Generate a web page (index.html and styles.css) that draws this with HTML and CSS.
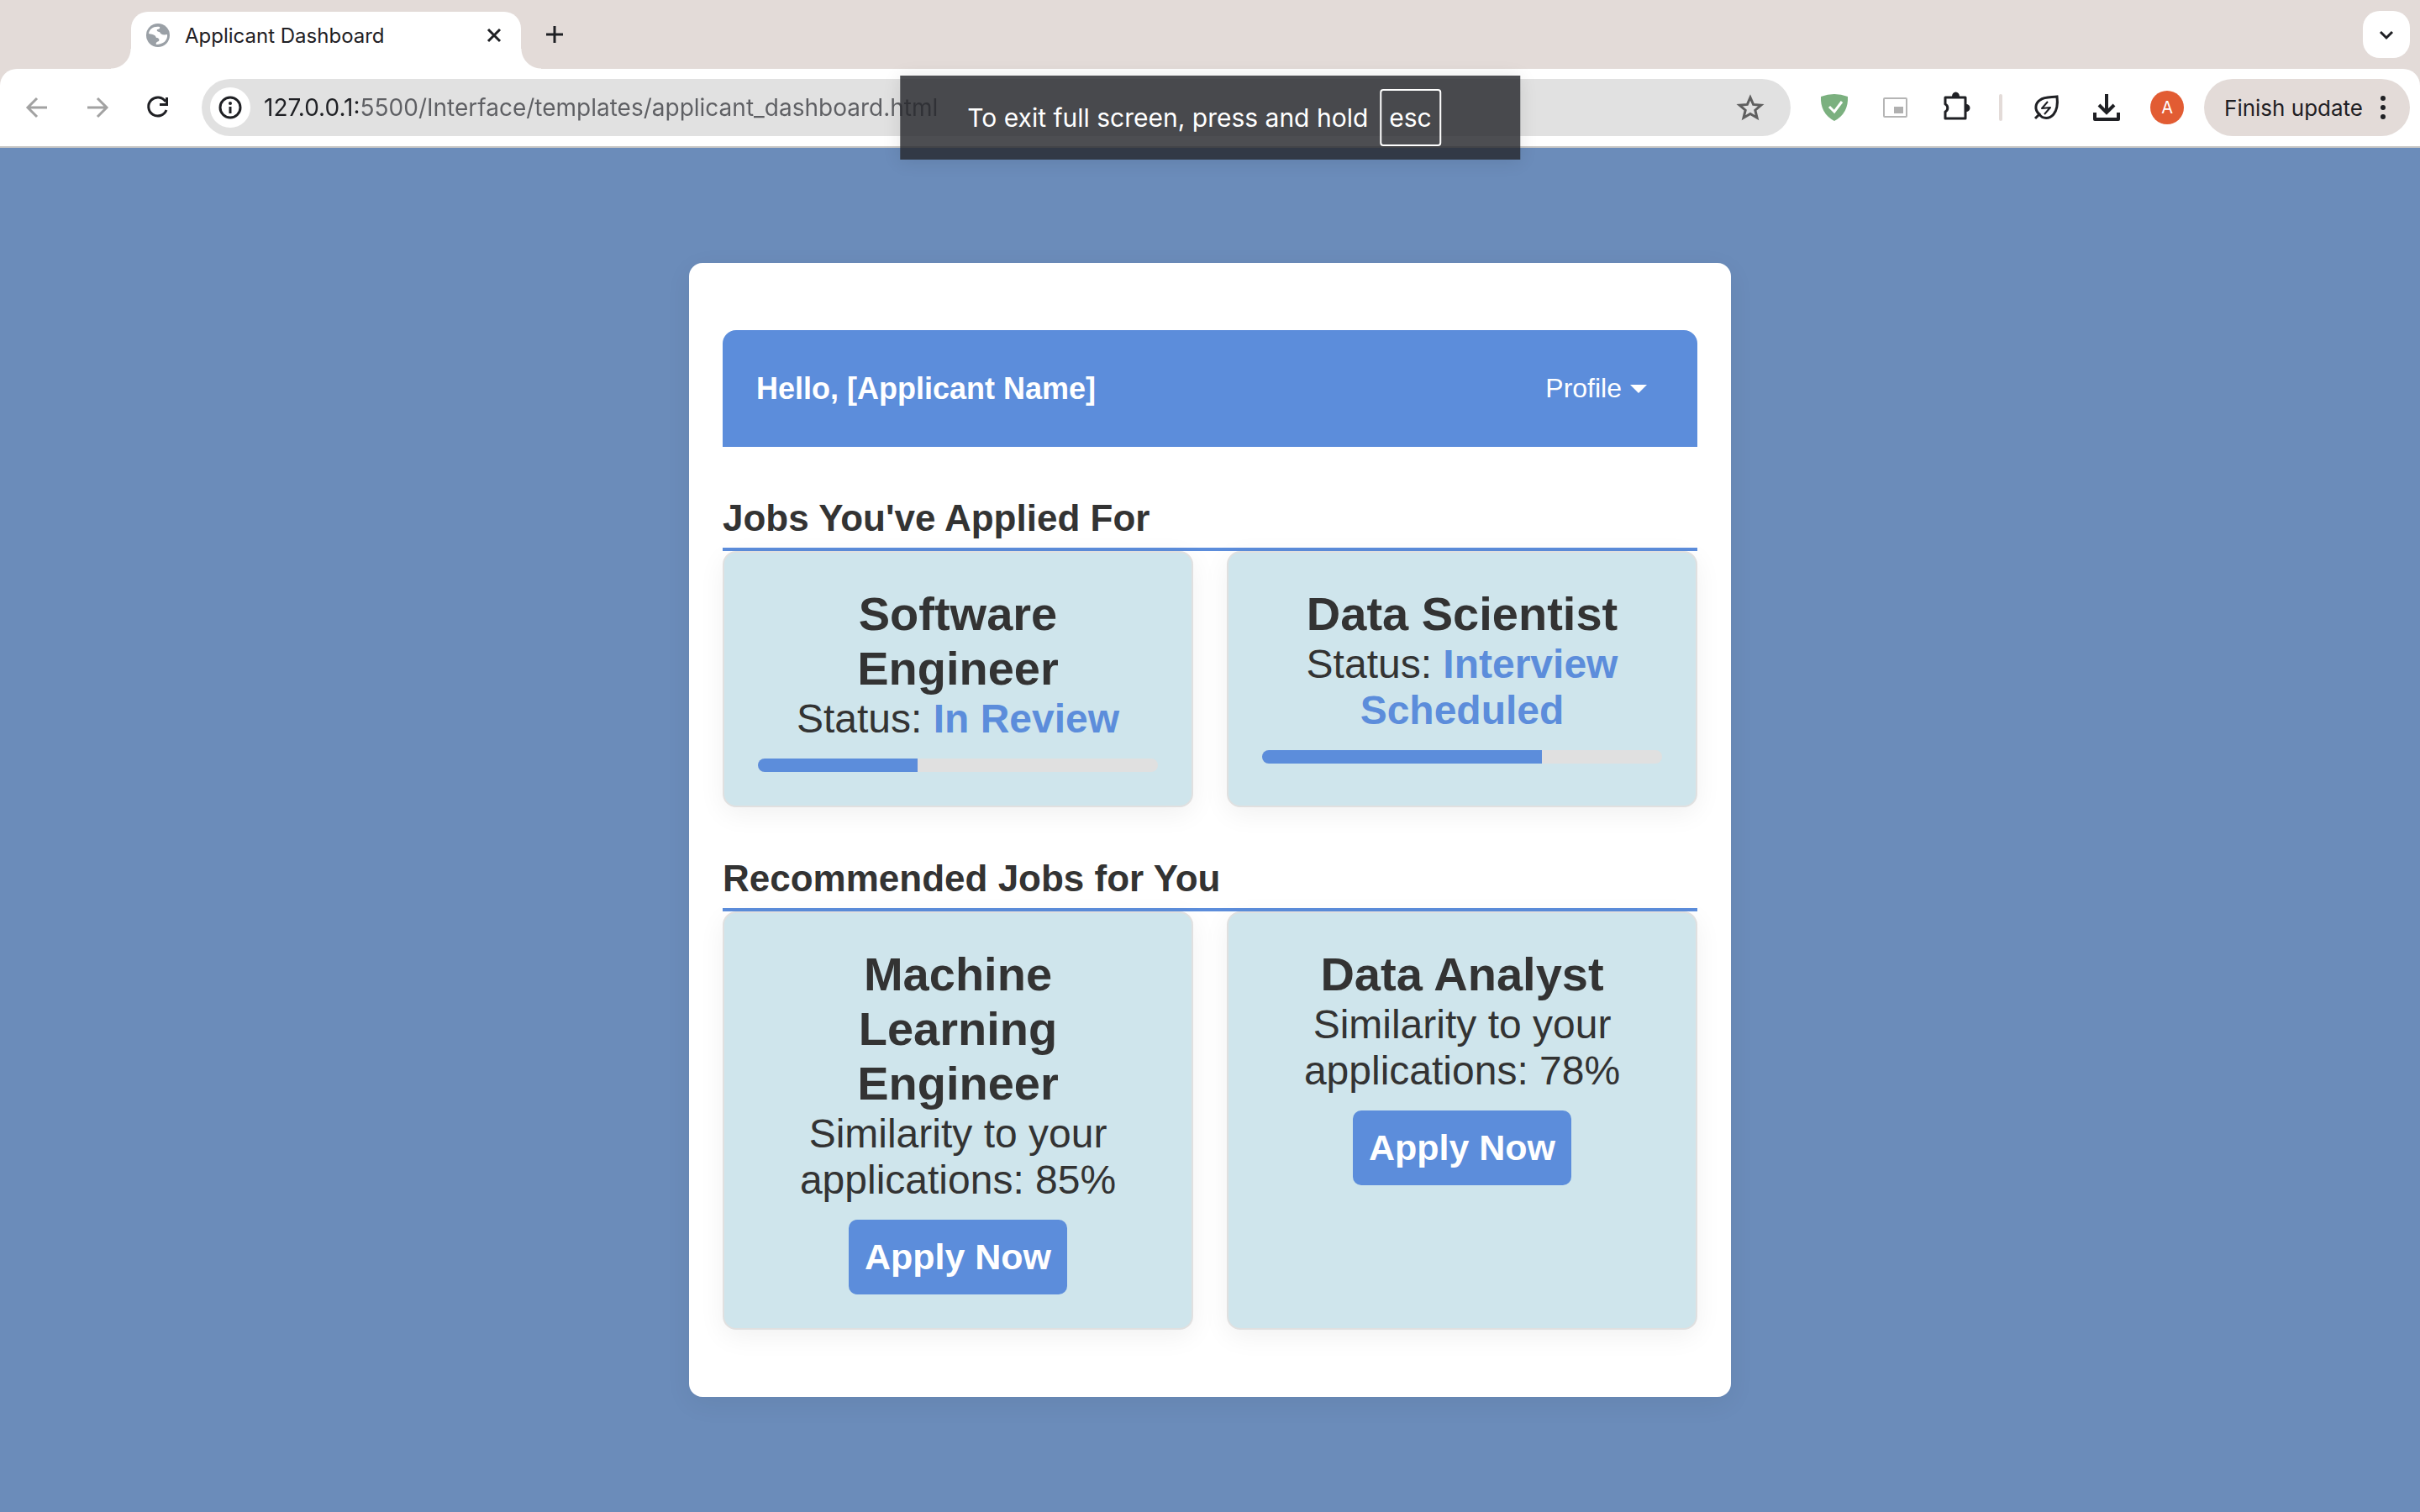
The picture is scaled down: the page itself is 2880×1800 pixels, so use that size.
FILE: index.html
```html
<!DOCTYPE html>
<html lang="en">
<head>
    <meta charset="UTF-8">
    <meta name="viewport" content="width=device-width, initial-scale=1.0">
    <title>Applicant Dashboard</title>
    <link rel="stylesheet" href="styles.css">
</head>
<body>

    <!-- Browser window -->
    <header class="browser">
        <div class="tab-bar">
            <div class="tab">
                <svg class="favicon" viewBox="0 0 28 28" aria-hidden="true">
                    <circle cx="14" cy="14" r="14" fill="#9aa0a6"/>
                    <path d="M3 12C4 6 9 3 16 4C17 6 15 7 13 7C12 9 14 10 16 10C17 13 20 14 25 13C26 20 20 25 12 25C11 23 12 22 15 21C16 19 15 17 12 17C11 14 9 13 3 12Z" fill="#fff"/>
                </svg>
                <span class="tab-title">Applicant Dashboard</span>
                <button class="icon-btn tab-close" aria-label="Close tab">
                    <svg viewBox="0 0 28 28"><path d="M7 7L21 21M21 7L7 21" stroke-width="3"/></svg>
                </button>
            </div>
            <button class="icon-btn" aria-label="New tab">
                <svg viewBox="0 0 40 40"><path d="M20 10V30M10 20H30" stroke-width="3"/></svg>
            </button>
            <button class="tab-search" aria-label="Search tabs">
                <svg viewBox="0 0 40 40"><path d="M13 17L20 24L27 17" stroke-width="3"/></svg>
            </button>
        </div>

        <div class="toolbar">
            <button class="icon-btn muted" aria-label="Back">
                <svg viewBox="0 0 40 40"><path d="M32 20H10M20 9L9 20L20 31" stroke-width="3"/></svg>
            </button>
            <button class="icon-btn muted" aria-label="Forward">
                <svg viewBox="0 0 40 40"><path d="M8 20H30M20 9L31 20L20 31" stroke-width="3"/></svg>
            </button>
            <button class="icon-btn" aria-label="Reload">
                <svg viewBox="0 0 40 40"><path d="M29 13A11 11 0 1 0 30 23" stroke-width="3"/><path d="M32 8V18H22V15H29V8Z" fill="currentColor" stroke="none"/></svg>
            </button>

            <div class="address-bar">
                <button class="site-info" aria-label="Site information">
                    <svg viewBox="0 0 28 28"><circle cx="14" cy="14" r="12" stroke-width="3"/><path d="M14 13V21" stroke-width="3"/><circle cx="14" cy="9" r="2" fill="currentColor" stroke="none"/></svg>
                </button>
                <input class="url" type="text" aria-label="Address" value="127.0.0.1:5500/Interface/templates/applicant_dashboard.html">
                <button class="icon-btn bookmark" aria-label="Bookmark this page">
                    <svg viewBox="0 0 40 40"><path d="M20 8L23.600 16.400L32.800 17.200L25.800 23.200L28 32.200L20 27.400L12 32.200L14.200 23.200L7.200 17.200L16.400 16.400Z" stroke-width="3"/></svg>
                </button>
            </div>

            <button class="icon-btn" aria-label="Ad blocker">
                <svg viewBox="0 0 40 40"><path d="M4 7Q20 1 36 7Q37 27 20 36Q3 27 4 7Z" fill="#7bb07f" stroke="none"/><path d="M14 19L20 25L29 13" stroke="#fff" stroke-width="3"/></svg>
            </button>
            <button class="icon-btn" aria-label="Picture in picture">
                <svg viewBox="0 0 40 40"><rect x="7" y="9" width="27" height="22" rx="1" stroke="#b5b5b5" stroke-width="2"/><rect x="19" y="19" width="11" height="8" fill="#b0b0b0" stroke="none"/></svg>
            </button>
            <button class="icon-btn" aria-label="Extensions">
                <svg viewBox="0 0 40 40"><path d="M8 8H32V33H8V25A5 5 0 0 0 8 16Z" stroke-width="3" stroke-linejoin="round"/><path d="M16 7A4 5 0 0 1 25 7ZM33 16A4 4 0 0 1 33 25Z" fill="currentColor" stroke="none"/></svg>
            </button>
            <span class="divider"></span>
            <button class="icon-btn" aria-label="Energy saver">
                <svg viewBox="0 0 40 40"><path d="M7 33L12 28C5 22 8 14 13 11C18 7 26 8 33 7C34 15 33 23 29 28C24 34 16 34 12 28" stroke-width="3"/><path d="M22 13L15 21L25 20L18 28" stroke-width="2" stroke-linejoin="round"/></svg>
            </button>
            <button class="icon-btn" aria-label="Downloads">
                <svg viewBox="0 0 40 40"><path d="M20 4V25" stroke-width="4"/><path d="M11 17L20 26L29 17" stroke-width="4"/><path d="M6 26V34H34V26" stroke-width="4" stroke-linejoin="round"/></svg>
            </button>
            <button class="avatar">A</button>
            <button class="update-btn">
                Finish update
                <svg viewBox="0 0 8 32" aria-hidden="true"><circle cx="4" cy="5" r="3"/><circle cx="4" cy="16" r="3"/><circle cx="4" cy="27" r="3"/></svg>
            </button>
        </div>

        <div class="fullscreen-hint">
            <span>To exit full screen, press and hold</span>
            <kbd>esc</kbd>
        </div>
    </header>

    <!-- Dashboard -->
    <main class="page">
        <div class="dashboard">
            <div class="dashboard-header">
                <h1>Hello, [Applicant Name]</h1>
                <button class="profile-btn">
                    Profile
                    <svg viewBox="0 0 20 10" aria-hidden="true"><path d="M0 0H20L10 10Z"/></svg>
                </button>
            </div>

            <section>
                <h2>Jobs You've Applied For</h2>
                <div class="job-list">
                    <div class="job-card">
                        <h3>Software Engineer</h3>
                        <p>Status: <span class="status">In Review</span></p>
                        <div class="progress-bar">
                            <div class="progress" style="width: 40%"></div>
                        </div>
                    </div>
                    <div class="job-card">
                        <h3>Data Scientist</h3>
                        <p>Status: <span class="status">Interview Scheduled</span></p>
                        <div class="progress-bar">
                            <div class="progress" style="width: 70%"></div>
                        </div>
                    </div>
                </div>
            </section>

            <section>
                <h2>Recommended Jobs for You</h2>
                <div class="job-list">
                    <div class="job-card">
                        <h3>Machine Learning Engineer</h3>
                        <p>Similarity to your applications: 85%</p>
                        <button class="apply-btn">Apply Now</button>
                    </div>
                    <div class="job-card">
                        <h3>Data Analyst</h3>
                        <p>Similarity to your applications: 78%</p>
                        <button class="apply-btn">Apply Now</button>
                    </div>
                </div>
            </section>
        </div>
    </main>

</body>
</html>
```
FILE: styles.css
```css
* {
    box-sizing: border-box;
    margin: 0;
    padding: 0;
}
body {
    display: flex;
    flex-direction: column;
    min-height: 100vh;
    font-family: Arial, "Liberation Sans", sans-serif;
    color: #333;
    background: #6b8cba;
}
button {
    border: none;
    background: none;
    color: inherit;
    font-family: inherit;
    cursor: pointer;
}

/* Browser window */
.browser {
    position: relative;
    font-family: Inter, sans-serif;
    color: #1f2024;
    background: #e3dbd8;
}
.browser svg {
    display: block;
    fill: none;
    stroke: currentColor;
}
.tab-bar {
    display: flex;
    align-items: center;
    gap: 20px;
    height: 82px;
    padding: 14px 12px 0 156px;
}
.tab {
    position: relative;
    display: flex;
    align-items: center;
    width: 464px;
    height: 68px;
    padding: 0 18px 12px;
    background: #fff;
    border-radius: 20px 20px 0 0;
}
/* curved feet of the tab */
.tab::before,
.tab::after {
    content: "";
    position: absolute;
    bottom: 0;
    width: 24px;
    height: 24px;
}
.tab::before {
    right: 100%;
    background: radial-gradient(circle at 0 0, transparent 23px, #fff 24px);
}
.tab::after {
    left: 100%;
    background: radial-gradient(circle at 100% 0, transparent 23px, #fff 24px);
}
.browser .favicon {
    width: 28px;
    height: 28px;
    stroke: none;
}
.tab-title {
    flex: 1;
    padding-left: 18px;
    font-size: 24px;
}
.icon-btn {
    flex: none;
    width: 40px;
    height: 40px;
}
.tab-bar > button {
    margin-bottom: 14px;
}
.tab .tab-close {
    width: 28px;
    height: 28px;
}
.tab-search {
    margin-left: auto;
    width: 56px;
    height: 56px;
    padding: 8px;
    background: #fff;
    border-radius: 20px;
}
.muted {
    color: #a2a2a2;
}
.toolbar {
    display: flex;
    align-items: center;
    gap: 32px;
    height: 94px;
    padding: 0 12px 0 24px;
    background: #fff;
    border-bottom: 2px solid #c9c8c6;
    border-radius: 20px 20px 0 0;
}
.address-bar {
    display: flex;
    flex: 1;
    align-items: center;
    height: 68px;
    padding: 0 28px 0 10px;
    background: #e1e1e1;
    border-radius: 34px;
}
.site-info {
    width: 48px;
    height: 48px;
    padding: 10px;
    background: #fff;
    border-radius: 50%;
}
/* host is darker than the rest of the address */
.url {
    flex: 1;
    height: 40px;
    padding-left: 16px;
    border: none;
    outline: none;
    font-family: inherit;
    font-size: 28px;
    color: transparent;
    background: linear-gradient(90deg, #1f2024 128px, #5e5f63 128px);
    -webkit-background-clip: text;
    background-clip: text;
}
.bookmark {
    color: #5f5f5f;
}
.divider {
    width: 4px;
    height: 32px;
    background: #e3dbd8;
    border-radius: 2px;
}
.avatar {
    width: 40px;
    height: 40px;
    font-size: 20px;
    color: #fff;
    background: #e25c33;
    border-radius: 50%;
}
.update-btn {
    display: flex;
    align-items: center;
    gap: 20px;
    height: 68px;
    margin-left: -8px;
    padding: 0 28px 0 24px;
    font-size: 26px;
    background: #e3dbd8;
    border-radius: 34px;
}
.browser .update-btn svg {
    width: 8px;
    height: 32px;
    fill: currentColor;
    stroke: none;
}
.fullscreen-hint {
    position: absolute;
    top: 90px;
    left: 50%;
    transform: translateX(-50%);
    display: flex;
    align-items: center;
    gap: 14px;
    height: 100px;
    padding: 0 94px 0 80px;
    font-size: 30px;
    color: #fff;
    white-space: nowrap;
    background: rgba(38, 39, 44, 0.82);
    box-shadow: 0 2px 20px rgba(0, 0, 0, 0.1);
}
.fullscreen-hint kbd {
    padding: 14px 9px;
    line-height: 36px;
    font-family: inherit;
    font-size: 30px;
    border: 2px solid #fff;
    border-radius: 4px;
}

/* Dashboard */
.page {
    display: flex;
    flex: 1;
    align-items: center;
    justify-content: center;
}
.dashboard {
    width: 100%;
    max-width: 1240px;
    padding: 80px 40px;
    background: #fff;
    border-radius: 16px;
    box-shadow: 0 8px 32px rgba(0, 0, 0, 0.06);
}
.dashboard-header {
    display: flex;
    align-items: center;
    justify-content: space-between;
    padding: 40px;
    color: #fff;
    background: #5c8ddb;
    border-radius: 16px 16px 0 0;
}
.dashboard-header h1 {
    font-size: 36px;
}
.profile-btn {
    display: flex;
    align-items: center;
    gap: 10px;
    padding: 10px 20px;
    font-size: 32px;
    line-height: 39px;
}
.profile-btn svg {
    width: 20px;
    height: 10px;
    fill: currentColor;
}
section {
    margin-top: 60px;
}
h2 {
    padding-bottom: 10px;
    font-size: 44px;
    line-height: 50px;
    border-bottom: 4px solid #5c8ddb;
}
.job-list {
    display: grid;
    grid-template-columns: 1fr 1fr;
    gap: 40px;
}
.job-card {
    padding: 40px;
    text-align: center;
    background: #cfe5ec;
    border: 2px solid #e0e0e0;
    border-radius: 16px;
    box-shadow: 0 8px 32px rgba(0, 0, 0, 0.06);
}
.job-card h3 {
    font-size: 56px;
    line-height: 65px;
}
.job-card p {
    font-size: 48px;
    line-height: 55px;
}
.status {
    font-weight: bold;
    color: #5c8ddb;
}
.progress-bar {
    height: 16px;
    margin-top: 20px;
    overflow: hidden;
    background: #e0e0e0;
    border-radius: 8px;
}
.progress {
    height: 100%;
    background: #5c8ddb;
}
.apply-btn {
    margin-top: 20px;
    padding: 20px 19px;
    font-size: 43px;
    font-weight: bold;
    line-height: 49px;
    color: #fff;
    background: #5c8ddb;
    border-radius: 10px;
    vertical-align: top;
}
```
